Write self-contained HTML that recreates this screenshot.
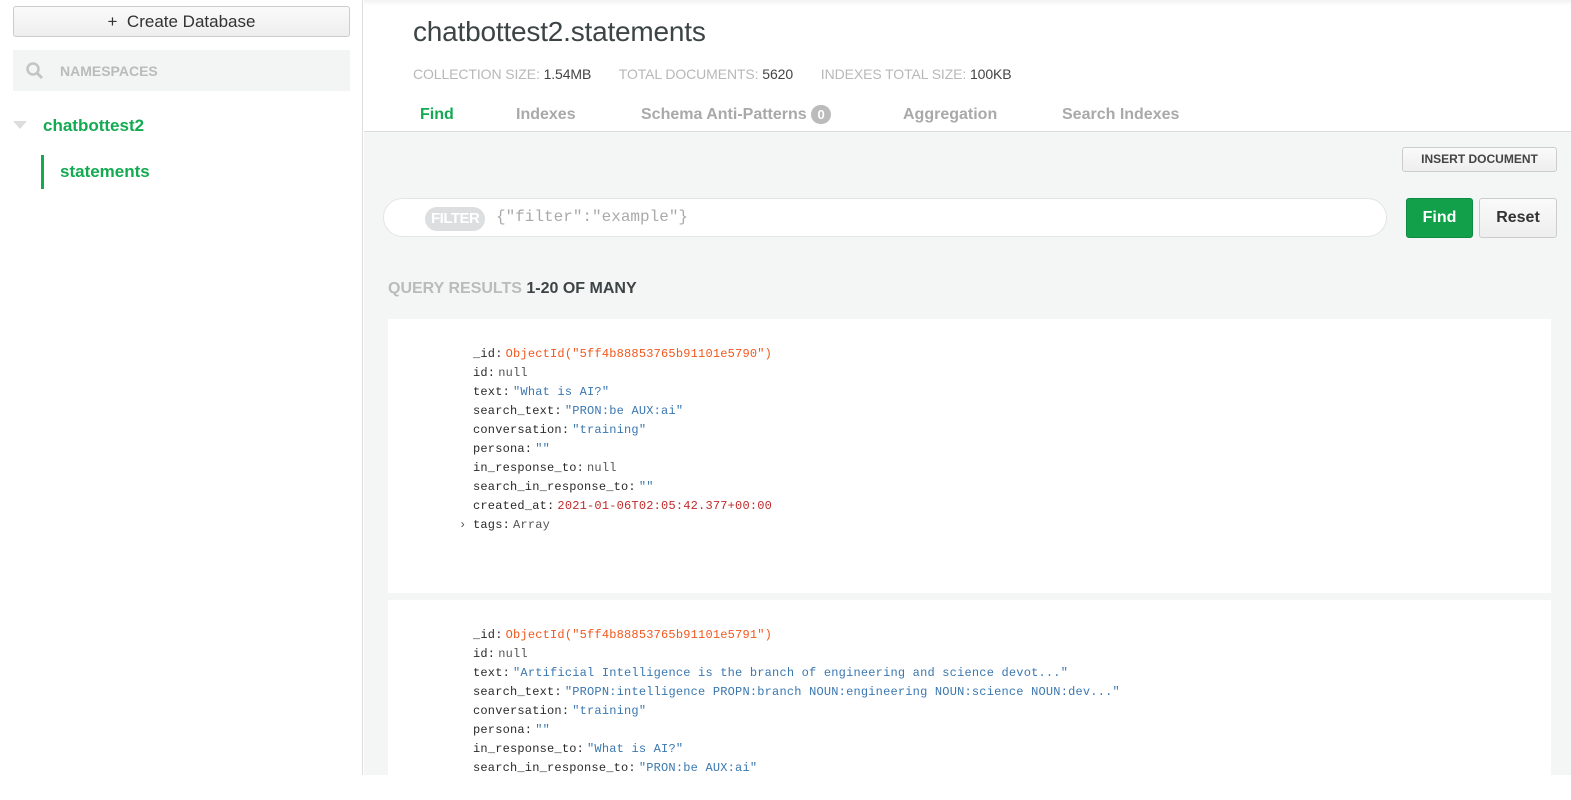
<!DOCTYPE html>
<html><head><meta charset="utf-8"><style>
*{box-sizing:border-box;margin:0;padding:0}
body{width:1571px;height:775px;overflow:hidden;background:#fff;font-family:"Liberation Sans",sans-serif;position:relative}
.side{position:absolute;left:0;top:0;width:363px;height:775px;background:#fff;border-right:1px solid #ddd}
.cdb{position:absolute;left:13px;top:6px;width:337px;height:31px;border:1px solid #ccc;border-radius:3px;background:linear-gradient(#fafafa,#eee);text-align:center;font-size:17px;line-height:29px;color:#333}
.ns{position:absolute;left:13px;top:50px;width:337px;height:41px;background:#f3f4f4}
.ns span{position:absolute;left:47px;top:13px;font-size:14px;font-weight:bold;color:#bbb}
.db{position:absolute;left:43px;top:116px;font-size:17px;font-weight:bold;color:#13aa52}
.tri{position:absolute;left:13px;top:121px;width:0;height:0;border-left:7px solid transparent;border-right:7px solid transparent;border-top:8px solid #ddd}
.col{position:absolute;left:41px;top:155px;height:34px;border-left:3px solid #13aa52;padding-left:16px;font-size:17px;font-weight:bold;color:#13aa52;line-height:34px}
.main{position:absolute;left:364px;top:0;right:0;height:775px;background:#f4f5f5}
.hdr{position:absolute;left:0;top:0;right:0;height:132px;background:#fff;border-bottom:1px solid #ddd;box-shadow:inset 0 6px 6px -4px #eef0f0}
h1{position:absolute;left:49px;top:16px;font-size:28px;font-weight:normal;color:#3d4446;letter-spacing:-0.2px}
.meta{position:absolute;left:49px;top:66px;font-size:14px;color:#b8b8b8;white-space:nowrap;letter-spacing:-0.1px}
.meta b{font-weight:normal;color:#444;margin-right:24px}
.tabs{position:absolute;top:104px;height:22px;line-height:22px;font-size:16px;font-weight:bold;color:#a9a9a9;white-space:nowrap}
.badge{display:inline-block;width:20px;height:19px;border-radius:10px;background:#bbb;color:#fff;font-size:13px;text-align:center;line-height:19px;vertical-align:top;margin-top:1px}
.ins{position:absolute;left:1038px;top:147px;width:155px;height:25px;border:1px solid #ccc;border-radius:3px;background:linear-gradient(#fafafa,#eee);font-size:12px;font-weight:bold;color:#444;text-align:center;line-height:23px}
.filter{position:absolute;left:19px;top:198px;width:1004px;height:39px;border:1px solid #e4e4e4;border-radius:20px;background:#fff}
.fl{position:absolute;left:41px;top:8px;height:24px;padding:0 6px;border-radius:12px;background:#dcdedf;color:#fff;font-weight:bold;font-size:15px;line-height:24px;letter-spacing:-0.5px}
.fp{position:absolute;left:112px;top:9px;font-family:"Liberation Mono",monospace;font-size:16px;color:#aaa}
.find{position:absolute;left:1042px;top:198px;width:67px;height:40px;border:1px solid #0e8a42;border-radius:3px;background:#13a04a;color:#fff;font-weight:bold;font-size:16px;text-align:center;line-height:38px}
.reset{position:absolute;left:1115px;top:198px;width:78px;height:40px;border:1px solid #ccc;border-radius:3px;background:linear-gradient(#fafafa,#eee);color:#333;font-weight:bold;font-size:16px;text-align:center;line-height:38px}
.qr{position:absolute;left:24px;top:280px;font-size:16px;font-weight:bold;color:#bbb}
.qr b{color:#3d4446}
.card{position:absolute;left:24px;width:1163px;background:#fff}
.doc{position:absolute;left:85px;top:26px;font-family:"Liberation Mono",monospace;font-size:12px;line-height:19px;white-space:pre;color:#333;letter-spacing:0.2px}
.k{color:#2a2a2a;margin-right:3px}.o{color:#f2571d}.s{color:#3a77b0}.n{color:#555}.d{color:#c12a2a}
.arr{position:absolute;left:-14px;color:#555}
</style></head><body>
<div class="side">
<div class="cdb">+&nbsp; Create Database</div>
<div class="ns"><svg style="position:absolute;left:13px;top:12px" width="18" height="18" viewBox="0 0 18 18"><circle cx="7" cy="7" r="5.5" fill="none" stroke="#c4c4c4" stroke-width="2.5"/><path d="M11 11l5 5" stroke="#c4c4c4" stroke-width="3"/></svg><span>NAMESPACES</span></div>
<div class="tri"></div>
<div class="db">chatbottest2</div>
<div class="col">statements</div>
</div>
<div class="main">
<div class="hdr">
<h1>chatbottest2.statements</h1>
<div class="meta">COLLECTION SIZE: <b>1.54MB</b> TOTAL DOCUMENTS: <b>5620</b> INDEXES TOTAL SIZE: <b>100KB</b></div>
<div class="tabs" style="left:56px;color:#13aa52">Find</div>
<div class="tabs" style="left:152px">Indexes</div>
<div class="tabs" style="left:277px">Schema Anti-Patterns <span class="badge">0</span></div>
<div class="tabs" style="left:539px">Aggregation</div>
<div class="tabs" style="left:698px">Search Indexes</div>
</div>
<div class="ins">INSERT DOCUMENT</div>
<div class="filter"><span class="fl">FILTER</span><span class="fp">{"filter":"example"}</span></div>
<div class="find">Find</div>
<div class="reset">Reset</div>
<div class="qr">QUERY RESULTS <b>1-20 OF MANY</b></div>
<div class="card" style="top:319px;height:274px"><div class="doc"><span class="k">_id:</span><span class="o">ObjectId("5ff4b88853765b91101e5790")</span>
<span class="k">id:</span><span class="n">null</span>
<span class="k">text:</span><span class="s">"What is AI?"</span>
<span class="k">search_text:</span><span class="s">"PRON:be AUX:ai"</span>
<span class="k">conversation:</span><span class="s">"training"</span>
<span class="k">persona:</span><span class="s">""</span>
<span class="k">in_response_to:</span><span class="n">null</span>
<span class="k">search_in_response_to:</span><span class="s">""</span>
<span class="k">created_at:</span><span class="d">2021-01-06T02:05:42.377+00:00</span>
<span class="k">tags:</span><span class="n">Array</span><span class="arr" style="top:171px">›</span></div></div>
<div class="card" style="top:600px;height:200px"><div class="doc"><span class="k">_id:</span><span class="o">ObjectId("5ff4b88853765b91101e5791")</span>
<span class="k">id:</span><span class="n">null</span>
<span class="k">text:</span><span class="s">"Artificial Intelligence is the branch of engineering and science devot..."</span>
<span class="k">search_text:</span><span class="s">"PROPN:intelligence PROPN:branch NOUN:engineering NOUN:science NOUN:dev..."</span>
<span class="k">conversation:</span><span class="s">"training"</span>
<span class="k">persona:</span><span class="s">""</span>
<span class="k">in_response_to:</span><span class="s">"What is AI?"</span>
<span class="k">search_in_response_to:</span><span class="s">"PRON:be AUX:ai"</span></div></div>
</div>
</body></html>
